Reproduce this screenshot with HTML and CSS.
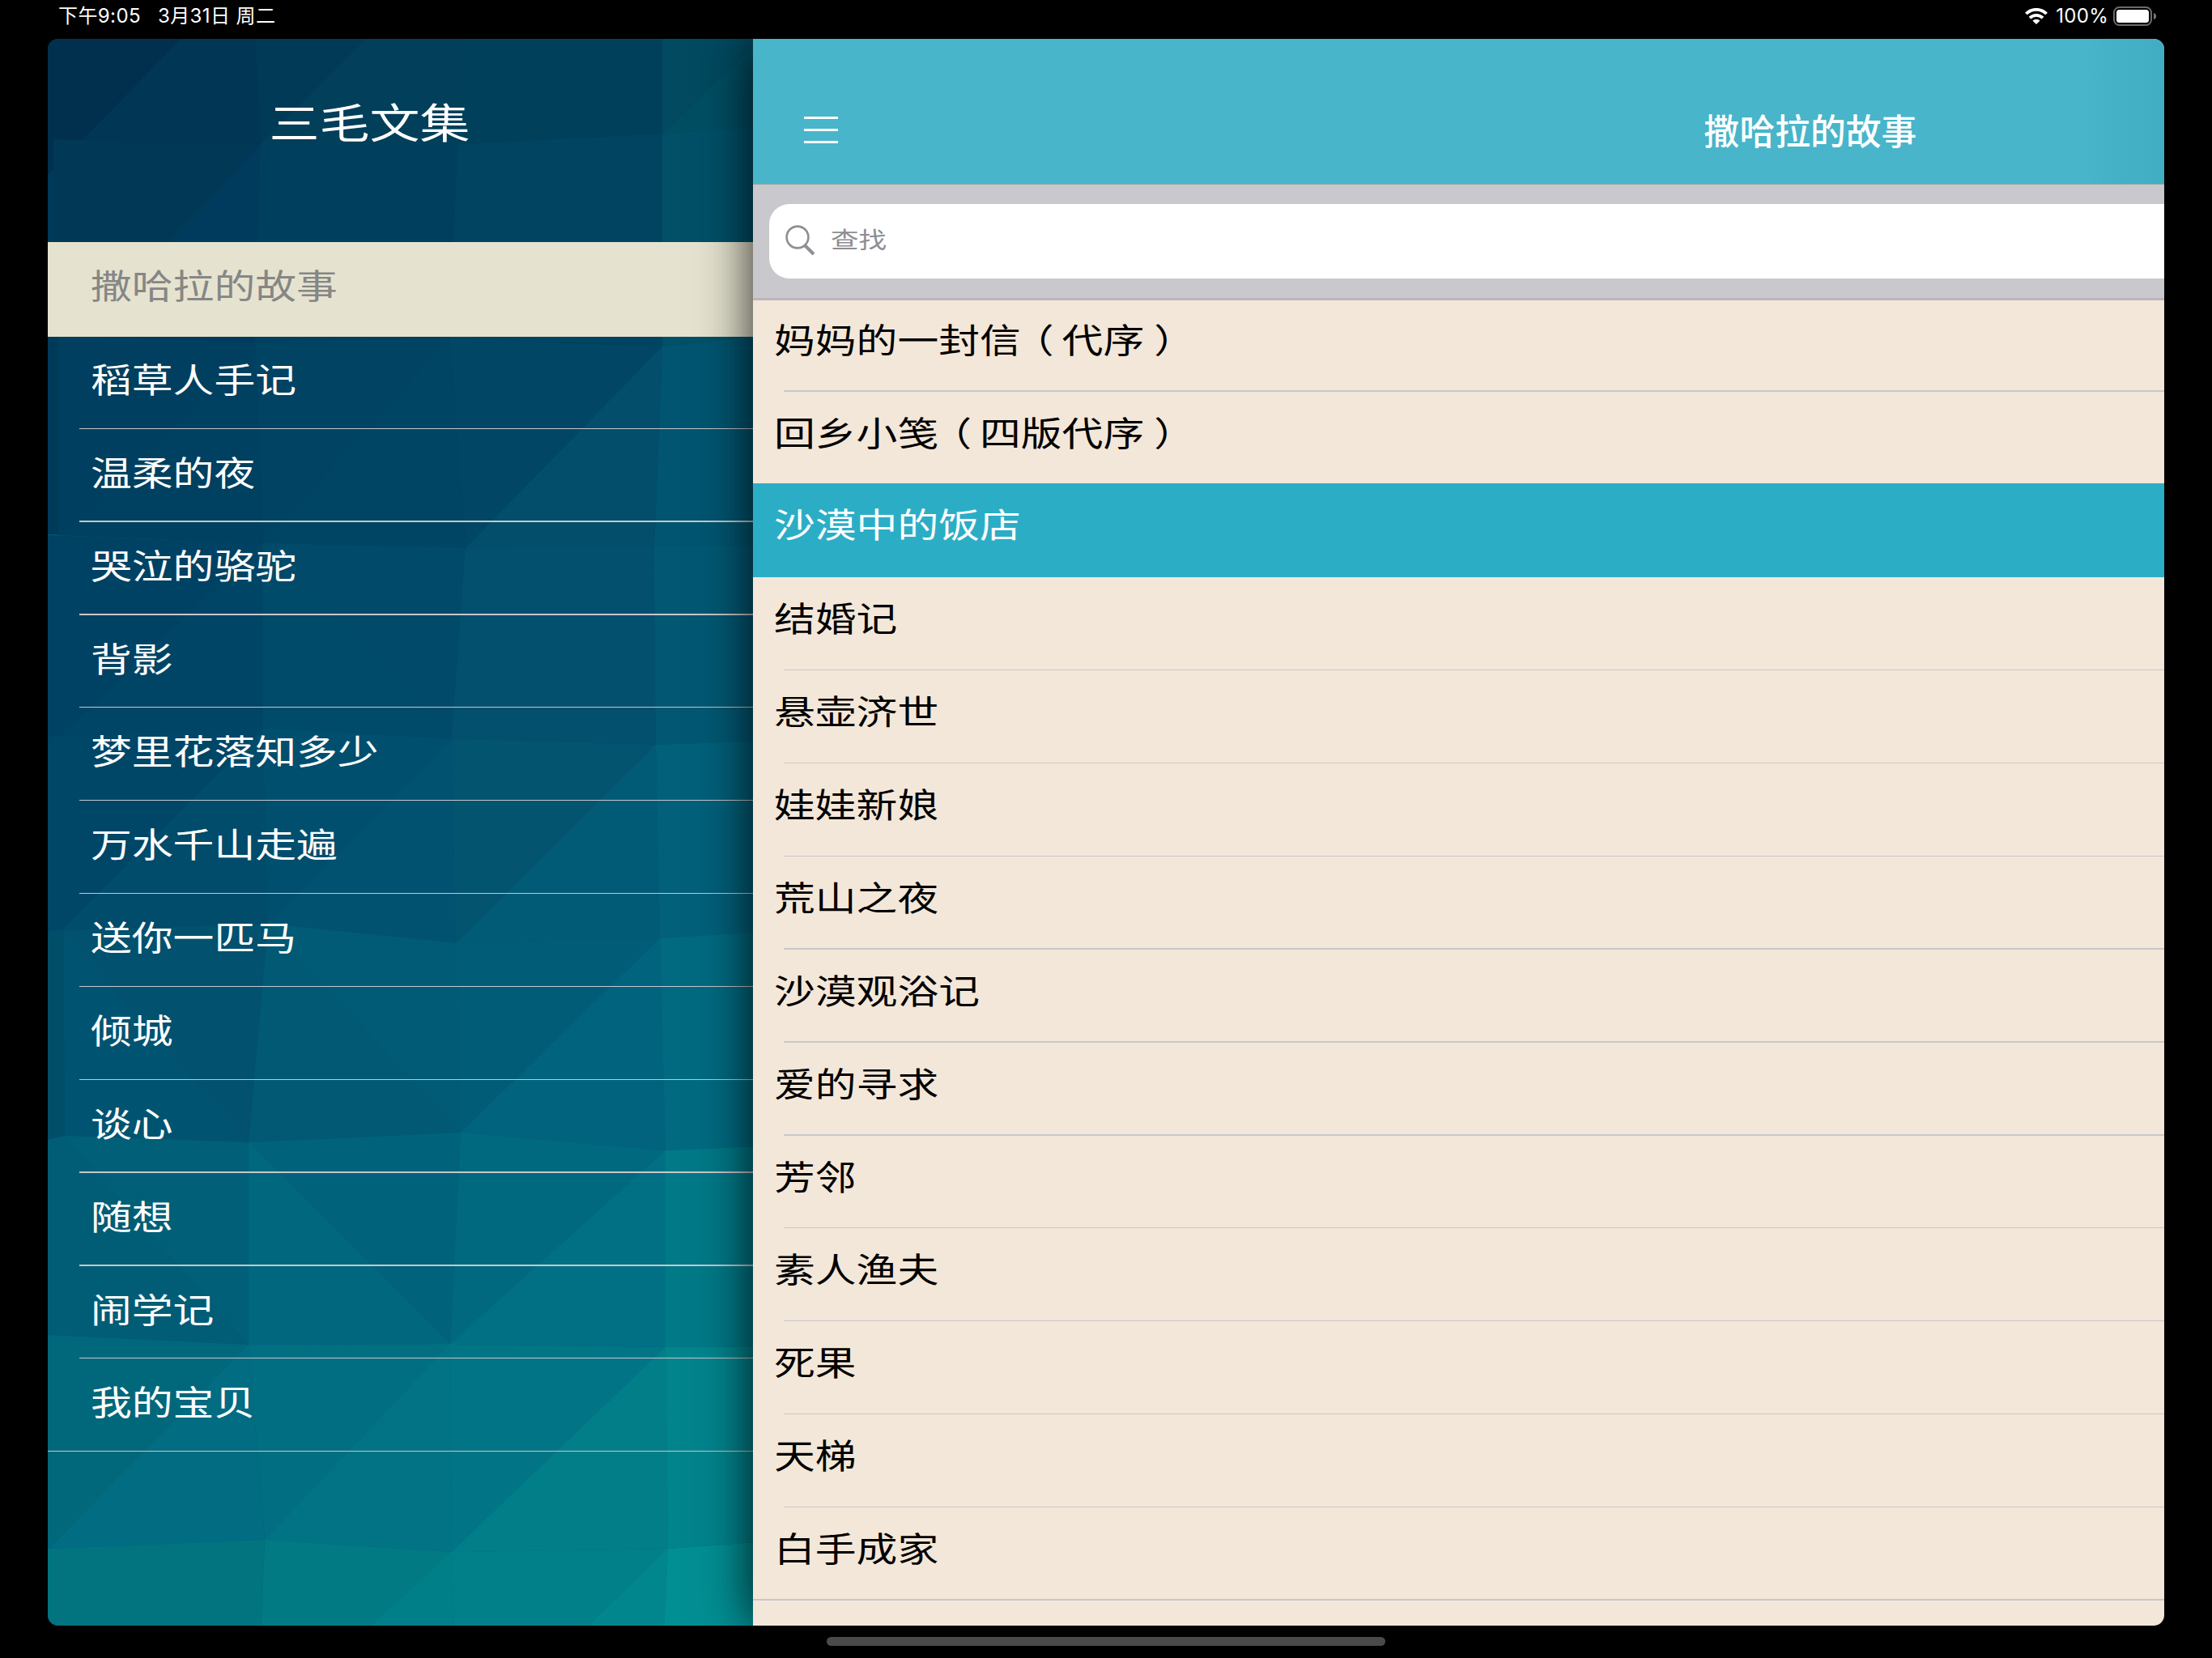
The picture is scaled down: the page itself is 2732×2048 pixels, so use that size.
FILE: index.html
```html
<!DOCTYPE html>
<html lang="zh-CN">

<head>
    <meta charset="UTF-8">
    <meta name="viewport" content="width=device-width, initial-scale=1.0">
    <title>三毛文集</title>
    <link rel="stylesheet" href="styles.css">
</head>

<body>
    <div class="status-bar">
        <div class="status-left">
            <span>下午9:05</span>
            <span>3月31日 周二</span>
        </div>
        <div class="status-right">
            <svg class="wifi" viewBox="0 0 28 20">
                <path d="M1.4 7 A17.8 17.8 0 0 1 26.6 7" />
                <path d="M6 12.2 A11.3 11.3 0 0 1 22 12.2" />
                <path class="dot" d="M14 20 L9.4 15.6 A6.6 6.6 0 0 1 18.6 15.6 Z" />
            </svg>
            <span>100%</span>
            <svg class="battery" viewBox="0 0 54 24">
                <rect class="case" x="1" y="1" width="46" height="22" rx="6.5" />
                <rect class="level" x="4" y="4" width="40" height="16" rx="3.5" />
                <path class="cap" d="M50 8 Q53 9 53 12 Q53 15 50 16 Z" />
            </svg>
        </div>
    </div>

    <div class="app">
        <!-- Sidebar -->
        <div class="sidebar">
            <svg class="sidebar-bg" viewBox="59 48 871 1960" preserveAspectRatio="none">
                <rect x="59" y="48" width="900" height="620" fill="#003a59" />
                <rect x="59" y="660" width="900" height="1348" fill="#015670" />
                <!-- row 1 -->
                <polygon points="40,0 320,0 322,178 40,172" fill="#013655" />
                <polygon points="40,0 270,0 59,217 40,217" fill="#01304f" />
                <polygon points="313,0 572,0 565,178 322,178" fill="#013a57" />
                <polygon points="500,0 572,0 565,178 322,178" fill="#013f5a" />
                <polygon points="572,0 818,0 818,165 565,178" fill="#01405b" />
                <polygon points="818,0 960,0 960,155 818,165" fill="#014a60" />
                <polygon points="960,30 960,155 818,165" fill="#014e63" />
                <!-- row 2 -->
                <polygon points="66,172 322,178 315,423 66,415" fill="#013855" />
                <polygon points="322,178 318,423 90,423" fill="#003b5d" />
                <polygon points="322,178 565,178 555,418 315,423" fill="#00405e" />
                <polygon points="565,178 818,165 818,428 555,418" fill="#014461" />
                <polygon points="818,165 960,155 960,412 818,428" fill="#015068" />
                <!-- row 3 -->
                <polygon points="72,415 315,423 325,671 72,661" fill="#003f5f" />
                <polygon points="315,423 325,671 76,661" fill="#004060" />
                <polygon points="315,423 555,418 575,677 325,671" fill="#004363" />
                <polygon points="555,418 575,677 325,671" fill="#004564" />
                <polygon points="555,418 818,428 808,675 575,677" fill="#014665" />
                <polygon points="818,428 808,675 575,677" fill="#024e6b" />
                <polygon points="818,428 960,412 960,673 808,675" fill="#015570" />
                <!-- row 4 -->
                <polygon points="59,661 325,671 325,900 59,910" fill="#004263" />
                <polygon points="325,671 325,900 73,910" fill="#014566" />
                <polygon points="325,671 575,677 558,913 325,900" fill="#014a6a" />
                <polygon points="325,671 558,913 325,900" fill="#014b6a" />
                <polygon points="575,677 808,675 810,920 558,913" fill="#02506e" />
                <polygon points="808,675 960,673 960,915 810,920" fill="#025873" />
                <!-- row 5 -->
                <polygon points="59,910 325,900 331,1141 59,1150" fill="#004667" />
                <polygon points="325,900 331,1141 75,1150" fill="#014b6b" />
                <polygon points="325,900 558,913 563,1165 331,1141" fill="#014f6e" />
                <polygon points="558,913 563,1165 331,1141" fill="#015270" />
                <polygon points="558,913 810,920 815,1159 563,1165" fill="#02546f" />
                <polygon points="810,920 815,1159 563,1165" fill="#025b76" />
                <polygon points="810,920 960,915 960,1150 815,1159" fill="#02607a" />
                <!-- row 6 -->
                <polygon points="59,1150 331,1141 307,1411 59,1405" fill="#015471" />
                <polygon points="75,1150 331,1141 307,1411" fill="#01516f" />
                <polygon points="331,1141 563,1165 569,1399 307,1411" fill="#015974" />
                <polygon points="331,1141 563,1165 569,1399" fill="#015b76" />
                <polygon points="563,1165 815,1159 822,1421 569,1399" fill="#015d77" />
                <polygon points="815,1159 822,1421 569,1399" fill="#01637d" />
                <polygon points="815,1159 960,1150 960,1415 822,1421" fill="#016a81" />
                <polygon points="59,1150 79,1150 80,1403 59,1408" fill="#014e69" />
                <!-- row 7 -->
                <polygon points="59,1408 80,1403 307,1411 307,1661 59,1649" fill="#015d76" />
                <polygon points="80,1403 307,1411 307,1661" fill="#015f78" />
                <polygon points="307,1411 569,1399 556,1660 307,1661" fill="#01627c" />
                <polygon points="307,1411 307,1661 556,1660" fill="#01677f" />
                <polygon points="569,1399 822,1421 822,1664 556,1660" fill="#01697f" />
                <polygon points="822,1421 822,1664 556,1660" fill="#017084" />
                <polygon points="822,1421 960,1415 960,1664 822,1664" fill="#017987" />
                <!-- row 8 -->
                <polygon points="59,1649 307,1661 327,1902 59,1913" fill="#01687c" />
                <polygon points="307,1661 327,1902 61,1913" fill="#016c82" />
                <polygon points="307,1661 556,1660 558,1917 327,1902" fill="#016e82" />
                <polygon points="556,1660 558,1917 327,1902" fill="#017385" />
                <polygon points="556,1660 822,1664 825,1913 558,1917" fill="#017585" />
                <polygon points="822,1664 825,1913 558,1917" fill="#027e89" />
                <polygon points="822,1664 960,1664 960,1903 825,1913" fill="#02848d" />
                <!-- row 9 -->
                <polygon points="59,1913 327,1902 322,2020 59,2020" fill="#017480" />
                <polygon points="327,1902 558,1917 561,2020 322,2020" fill="#017a84" />
                <polygon points="558,1917 561,2020 445,2020" fill="#017f89" />
                <polygon points="558,1917 825,1913 820,2020 561,2020" fill="#02808a" />
                <polygon points="825,1913 820,2020 715,2020" fill="#02868d" />
                <polygon points="825,1913 960,1903 960,2020 820,2020" fill="#028f94" />
            </svg>
            <h1 class="brush">三毛文集</h1>
            <ul class="books">
                <li class="active"><span class="brush">撒哈拉的故事</span></li>
                <li><span class="brush">稻草人手记</span></li>
                <li><span class="brush">温柔的夜</span></li>
                <li><span class="brush">哭泣的骆驼</span></li>
                <li><span class="brush">背影</span></li>
                <li><span class="brush">梦里花落知多少</span></li>
                <li><span class="brush">万水千山走遍</span></li>
                <li><span class="brush">送你一匹马</span></li>
                <li><span class="brush">倾城</span></li>
                <li><span class="brush">谈心</span></li>
                <li><span class="brush">随想</span></li>
                <li><span class="brush">闹学记</span></li>
                <li><span class="brush">我的宝贝</span></li>
            </ul>
        </div>

        <!-- Chapter list, pushed aside by the sidebar -->
        <div class="main-content">
            <div class="navbar">
                <div class="hamburger">
                    <div class="bar"></div>
                    <div class="bar"></div>
                    <div class="bar"></div>
                </div>
                <h2>撒哈拉的故事</h2>
            </div>
            <div class="search-bar">
                <div class="search-field">
                    <svg class="search-icon" viewBox="0 0 38 38">
                        <circle cx="15" cy="15" r="13.4" />
                        <path d="M24.5 25.5 L35 36" />
                    </svg>
                    <span class="brush">查找</span>
                </div>
            </div>
            <ul class="chapters">
                <li><span class="brush">妈妈的一封信<i class="open">（</i>代序<i class="close">）</i></span></li>
                <li><span class="brush">回乡小笺<i class="open">（</i>四版代序<i class="close">）</i></span></li>
                <li class="active"><span class="brush">沙漠中的饭店</span></li>
                <li><span class="brush">结婚记</span></li>
                <li><span class="brush">悬壶济世</span></li>
                <li><span class="brush">娃娃新娘</span></li>
                <li><span class="brush">荒山之夜</span></li>
                <li><span class="brush">沙漠观浴记</span></li>
                <li><span class="brush">爱的寻求</span></li>
                <li><span class="brush">芳邻</span></li>
                <li><span class="brush">素人渔夫</span></li>
                <li><span class="brush">死果</span></li>
                <li><span class="brush">天梯</span></li>
                <li><span class="brush">白手成家</span></li>
            </ul>
        </div>
    </div>

    <div class="home-indicator"></div>
</body>

</html>
```
FILE: styles.css
```css
* {
    box-sizing: border-box;
    margin: 0;
    padding: 0;
}

body {
    width: 2732px;
    height: 2048px;
    overflow: hidden;
    display: flex;
    flex-direction: column;
    background-color: #000;
    font-family: "Noto Sans CJK SC", sans-serif;
}

ul {
    list-style: none;
}

/* flat, wide glyphs used for titles and lists */
.brush {
    display: block;
    transform: scaleY(0.82);
    white-space: nowrap;
}

/* half-width brackets, spaced so they sit in the middle of their cell */
.brush i {
    display: inline-block;
    font-style: normal;
    font-feature-settings: "halt";
}

.brush .open {
    margin: 0 10px 0 15.4px;
}

.brush .close {
    margin: 0 13px 0 12px;
}

/* Status bar */
.status-bar {
    height: 48px;
    padding: 0 68px 8px 72px;
    display: flex;
    justify-content: space-between;
    align-items: center;
    color: #fff;
    font-family: Inter, "Noto Sans CJK SC", sans-serif;
    font-size: 24px;
    line-height: 40px;
}

.status-left {
    display: flex;
    gap: 21px;
    letter-spacing: 0.4px;
}

.status-right {
    display: flex;
    align-items: center;
}

.status-right span {
    letter-spacing: 0.3px;
}

.wifi {
    width: 28px;
    height: 20px;
    margin-right: 10px;
    fill: none;
    stroke: #fff;
    stroke-width: 3.8;
}

.wifi .dot {
    fill: #fff;
    stroke: none;
}

.battery {
    width: 54px;
    height: 24px;
    margin-left: 6px;
}

.battery .case {
    fill: none;
    stroke: #6b6b6b;
    stroke-width: 2;
}

.battery .level {
    fill: #fff;
}

.battery .cap {
    fill: #7a7a7a;
}

.app {
    height: 1960px;
    margin: 0 59px;
    border-radius: 13px;
    overflow: hidden;
    display: flex;
}

/* Sidebar */
.sidebar {
    flex: none;
    position: relative;
    width: 871px;
    color: #fff;
}

.sidebar-bg {
    position: absolute;
    top: 0;
    left: 0;
    width: 100%;
    height: 100%;
    z-index: -1;
}

.sidebar h1 {
    height: 251px;
    padding: 0 76px 0 0;
    font-size: 62px;
    font-weight: 400;
    line-height: 193px;
    text-align: center;
}

.books li,
.chapters li {
    display: flex;
    flex-direction: column;
    height: 114.85px;
    font-size: 50.8px;
}

.books .brush,
.chapters .brush {
    flex: 1;
}

.books .brush {
    padding-left: 53px;
    line-height: 103px;
}

.books li::after,
.chapters li::after {
    content: "";
    height: 1.34px;
    margin-left: 39px;
    background-color: #c8c7cc;
}

.chapters li::after {
    margin-left: 38px;
}

.books li:last-child::after,
.chapters li:last-child::after {
    margin-left: 0;
}

.books li.active {
    height: 117px;
    margin-bottom: -0.9px;
    background-color: #e5e3cf;
    color: #868686;
}

.books li.active::after {
    background: none;
}

/* Main content */
.main-content {
    flex: none;
    position: relative;
    width: 2614px;
    background-color: #f3e7d9;
    color: #000;
    box-shadow: 0 0 60px rgba(0, 0, 0, 0.85);
}

.navbar {
    display: flex;
    align-items: center;
    height: 180px;
    padding: 44px 63px 0;
    border-bottom: 1px solid #8fa3a3;
    background: linear-gradient(to right, #48b5ca 1640px, #41adc2 1743px);
    color: #fff;
}

.hamburger {
    display: flex;
    flex-direction: column;
    gap: 12px;
    width: 42px;
    padding-top: 1px;
}

.bar {
    height: 3px;
    background-color: #fff;
}

.navbar h2 {
    flex: 1;
    padding-right: 44px;
    font-size: 43.8px;
    font-weight: 500;
    line-height: 60px;
    text-align: center;
}

.search-bar {
    height: 143px;
    padding: 24px 20px;
    border-bottom: 3px solid #b8b7bb;
    background-color: #c9c8cd;
}

.search-field {
    display: flex;
    align-items: center;
    gap: 18px;
    height: 92px;
    padding: 0 0 2px 20px;
    border-radius: 25px;
    background-color: #fff;
    color: #8e8e93;
    font-size: 34.6px;
    line-height: 86px;
}

.search-field .brush {
    padding-bottom: 6px;
}

.search-icon {
    width: 38px;
    height: 38px;
    fill: none;
    stroke: #8e8e93;
    stroke-width: 2.6;
}

.search-icon path {
    stroke-width: 4;
}

.chapters {
    margin-top: -2.1px;
}

.chapters .brush {
    padding-left: 26px;
    line-height: 95px;
}

.chapters li.active {
    height: 116.2px;
    margin-top: -1.35px;
    background-color: #2cadc6;
    color: #fff;
}

.chapters li.active::after,
.chapters li:nth-child(2)::after {
    background: none;
}

.home-indicator {
    width: 690px;
    height: 11px;
    margin: 14px auto 0;
    border-radius: 6px;
    background-color: #4a4a4a;
}
```
